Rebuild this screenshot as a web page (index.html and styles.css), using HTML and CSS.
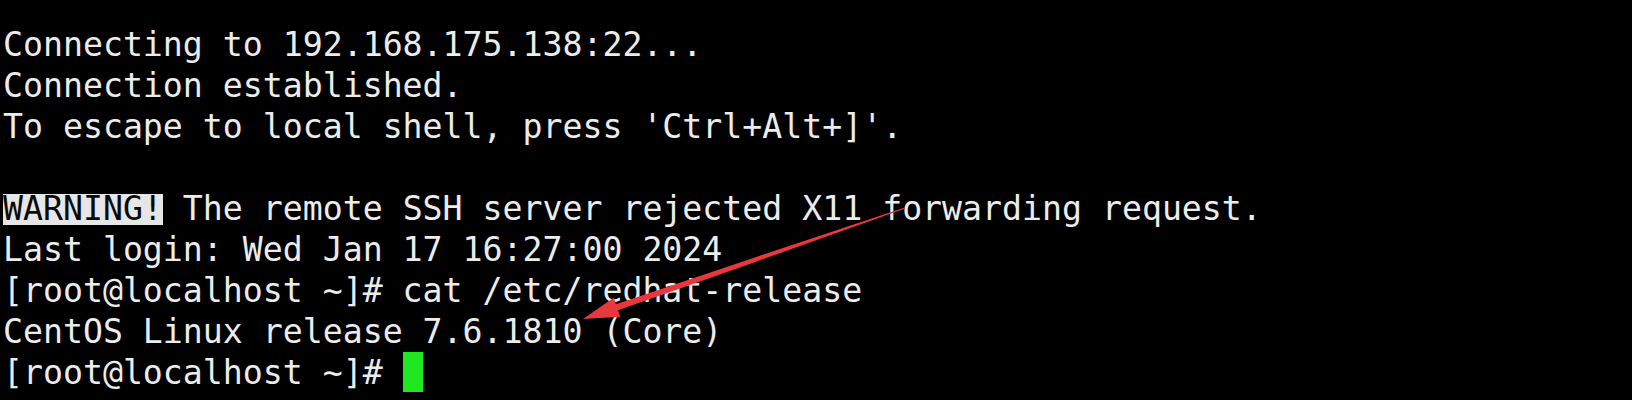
FILE: index.html
```html
<!DOCTYPE html>
<html>
<head>
<meta charset="utf-8">
<link rel="stylesheet" href="styles.css">
</head>
<body>
<div class="term">
<pre class="screen">Connecting to 192.168.175.138:22...
Connection established.
To escape to local shell, press 'Ctrl+Alt+]'.

<span class="hl">WARNING!</span> The remote SSH server rejected X11 forwarding request.
Last login: Wed Jan 17 16:27:00 2024
[root@localhost ~]# cat /etc/redhat-release
CentOS Linux release 7.6.1810 (Core)
[root@localhost ~]# <span class="cursor"></span></pre>
<svg class="arrow" width="1632" height="400" viewBox="0 0 1632 400">
<polygon points="583,319 620.3,316.7 618,310.3 753.9,262.4 905.2,208.5 904.8,207.5 752.5,258.2 616,304.3 613.7,297.8" fill="#e8383d"/>
</svg>
</div>
</body>
</html>
```
FILE: styles.css
```css
html, body {
  margin: 0;
  padding: 0;
  background: #000;
}
.term {
  position: relative;
  width: 1632px;
  height: 400px;
  overflow: hidden;
  background: #000;
}
.screen {
  margin: 0;
  padding: 24px 0 0 3px;
  font-family: "DejaVu Sans Mono", monospace;
  font-size: 33.2px;
  line-height: 41px;
  color: #ececec;
  white-space: pre;
}
.hl {
  color: #0a0a0a;
  background: linear-gradient(#e6e6e6, #e6e6e6) no-repeat;
  background-size: 100% 31px;
  background-position: 0 5px;
}
.cursor {
  display: inline-block;
  width: 20px;
  height: 40px;
  background: #1fe81f;
  vertical-align: top;
}
.arrow {
  position: absolute;
  left: 0;
  top: 0;
}
```
